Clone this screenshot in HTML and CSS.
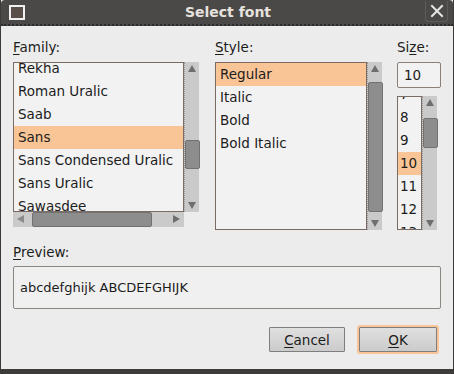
FILE: index.html
```html
<!DOCTYPE html>
<html lang="en">
<head>
    <meta charset="UTF-8">
    <title>Select font</title>
    <link rel="stylesheet" href="styles.css">
</head>
<body>

    <div class="window">
        <div class="titlebar">
            <span class="win-icon"></span>
            <span class="title">Select font</span>
            <span class="close">
                <svg width="14" height="14" viewBox="0 0 14 14">
                    <path d="M2 2 L12 12 M12 2 L2 12" stroke="#e6e6e6" stroke-width="2" stroke-linecap="square"/>
                </svg>
            </span>
        </div>

        <div class="dialog">
            <div class="pickers">
                <!-- Family -->
                <div class="col family">
                    <div class="label"><u>F</u>amily:</div>
                    <div class="scrolled">
                        <div class="viewport">
                            <div class="rows" style="margin-top: -6px;">
                                <div class="row">Rekha</div>
                                <div class="row">Roman Uralic</div>
                                <div class="row">Saab</div>
                                <div class="row selected">Sans</div>
                                <div class="row">Sans Condensed Uralic</div>
                                <div class="row">Sans Uralic</div>
                                <div class="row">Sawasdee</div>
                            </div>
                        </div>
                        <div class="vscroll">
                            <span class="arrow up"></span>
                            <span class="thumb" style="margin-top: 78px; height: 29px;"></span>
                            <span class="arrow down"></span>
                        </div>
                        <div class="hscroll">
                            <span class="arrow left"></span>
                            <span class="thumb" style="margin-left: 19px; width: 120px;"></span>
                            <span class="arrow right"></span>
                        </div>
                    </div>
                </div>

                <!-- Style -->
                <div class="col style">
                    <div class="label"><u>S</u>tyle:</div>
                    <div class="scrolled">
                        <div class="viewport">
                            <div class="rows">
                                <div class="row selected">Regular</div>
                                <div class="row">Italic</div>
                                <div class="row">Bold</div>
                                <div class="row">Bold Italic</div>
                            </div>
                        </div>
                        <div class="vscroll">
                            <span class="arrow up"></span>
                            <span class="thumb" style="margin-top: 20px; height: 130px;"></span>
                            <span class="arrow down"></span>
                        </div>
                    </div>
                </div>

                <!-- Size -->
                <div class="col size">
                    <div class="label">Si<u>z</u>e:</div>
                    <div class="entry">10</div>
                    <div class="scrolled">
                        <div class="viewport">
                            <div class="rows" style="margin-top: -14px;">
                                <div class="row">7</div>
                                <div class="row">8</div>
                                <div class="row">9</div>
                                <div class="row selected">10</div>
                                <div class="row">11</div>
                                <div class="row">12</div>
                                <div class="row">13</div>
                            </div>
                        </div>
                        <div class="vscroll">
                            <span class="arrow up"></span>
                            <span class="thumb" style="margin-top: 22px; height: 30px;"></span>
                            <span class="arrow down"></span>
                        </div>
                    </div>
                </div>
            </div>

            <div class="label preview-label"><u>P</u>review:</div>
            <div class="preview">abcdefghijk ABCDEFGHIJK</div>

            <div class="actions">
                <button class="btn"><u>C</u>ancel</button>
                <button class="btn default"><u>O</u>K</button>
            </div>
        </div>
    </div>

</body>
</html>
```

FILE: styles.css
```css
/* Global Styles */
body {
    margin: 0;
    font-family: "DejaVu Sans", sans-serif;
    font-size: 13.5px;
    color: #1c1c1c;
    background-color: #3a3836;
}

u {
    text-decoration: underline;
    text-underline-offset: 2px;
}

/* Window frame */
.window {
    width: 454px;
    height: 374px;
    box-sizing: border-box;
    background-color: #ececec;
    border-left: 1px solid #3c3a38;
    border-right: 1px solid #3c3a38;
    border-bottom: 5px solid #3e3c3a;
    display: flex;
    flex-direction: column;
}

.titlebar {
    height: 26px;
    flex-shrink: 0;
    background-color: #4b4947;
    border-bottom: 2px dotted #2e2c2b;
    box-sizing: border-box;
    display: flex;
    align-items: center;
    border-radius: 4px 4px 0 0;
}

.win-icon {
    width: 12px;
    height: 11px;
    margin-left: 8px;
    border: 2px solid #f0f0f0;
    background-color: #5a4e48;
}

.title {
    flex: 1;
    text-align: center;
    font-weight: bold;
    font-size: 14px;
    color: #e6e2de;
    margin-left: 6px;
}

.close {
    width: 23px;
    height: 21px;
    margin-right: 5px;
    margin-top: -2px;
    box-sizing: border-box;
    border: 1px solid #5e5c5a;
    border-top: none;
    border-radius: 0 0 3px 3px;
    display: flex;
    align-items: center;
    justify-content: center;
}

/* Dialog body */
.dialog {
    flex: 1;
    padding: 12px 12px 0 12px;
    display: flex;
    flex-direction: column;
}

.label {
    height: 18px;
    line-height: 18px;
    margin-bottom: 6px;
}

.pickers {
    display: flex;
    height: 192px;
}

.col {
    display: flex;
    flex-direction: column;
}

.family {
    width: 186px;
    margin-right: 16px;
}

.style {
    width: 167px;
    margin-right: 15px;
}

.size {
    width: 44px;
}

/* Scrolled lists */
.scrolled {
    display: grid;
    grid-template-columns: 1fr 15px;
    grid-template-rows: 1fr auto;
    flex: 1;
    min-height: 0;
}

.family .scrolled {
    flex: none;
    height: 165px;
}

.viewport {
    border: 1px solid #7a6c64;
    background-color: #f2f2f2;
    overflow: hidden;
}

.row {
    height: 23px;
    line-height: 23px;
    padding-left: 4px;
    white-space: nowrap;
}

.row.selected {
    background-color: #f9c596;
}

.size .row {
    padding-left: 2px;
}

.vscroll {
    position: relative;
    background-color: #cacaca;
    border-left: 1px dotted #9a9a9a;
    display: flex;
    flex-direction: column;
}

.vscroll .thumb {
    display: block;
    width: 15px;
    box-sizing: border-box;
    background-color: #8d8d8d;
    border: 1px solid #727272;
    border-radius: 2px;
}

.hscroll {
    position: relative;
    height: 15px;
    background-color: #cacaca;
    display: flex;
}

.hscroll .thumb {
    display: block;
    height: 15px;
    box-sizing: border-box;
    background-color: #8d8d8d;
    border: 1px solid #727272;
    border-radius: 2px;
}

.arrow {
    position: absolute;
    width: 0;
    height: 0;
    border: 4px solid transparent;
}

.arrow.up {
    top: 3px;
    left: 3px;
    border-bottom: 7px solid #6e6e6e;
    border-top: none;
}

.arrow.down {
    bottom: 3px;
    left: 3px;
    border-top: 7px solid #6e6e6e;
    border-bottom: none;
}

.arrow.left {
    left: 4px;
    top: 3px;
    border-right: 7px solid #8a8a8a;
    border-left: none;
}

.arrow.right {
    right: 4px;
    top: 3px;
    border-left: 7px solid #6e6e6e;
    border-right: none;
}

/* Size entry */
.entry {
    height: 26px;
    box-sizing: border-box;
    border: 1px solid #8a807a;
    border-radius: 2px;
    background-color: #f2f2f2;
    line-height: 24px;
    padding-left: 6px;
    margin-bottom: 8px;
}

.size .scrolled {
    width: 40px;
}

/* Preview */
.preview-label {
    margin-top: 13px;
    margin-bottom: 5px;
}

.preview {
    height: 43px;
    box-sizing: border-box;
    border: 1px solid #8c8680;
    border-radius: 2px;
    background-color: #f0f0f0;
    line-height: 41px;
    padding-left: 6px;
    font-size: 13px;
}

/* Buttons */
.actions {
    display: flex;
    justify-content: flex-end;
    gap: 14px;
    margin-top: 18px;
    padding-right: 4px;
}

.btn {
    height: 25px;
    width: 76px;
    font-family: "DejaVu Sans", sans-serif;
    font-size: 13.5px;
    color: #1c1c1c;
    background: linear-gradient(#e0e0e0, #cbcbcb);
    border: 1px solid #7e7e7e;
    border-radius: 1px;
    padding: 0;
    cursor: pointer;
}

.btn.default {
    width: 78px;
    box-shadow: 0 0 0 2px #f9c596;
}
```
